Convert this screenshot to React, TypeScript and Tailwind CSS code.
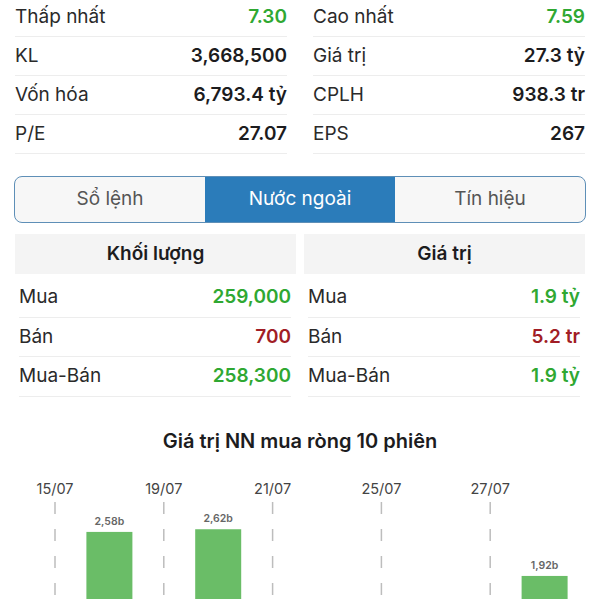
const font = { fontFamily: "Inter, 'Liberation Sans', sans-serif" }

type Stat = { label: string; value: string; tone?: "up" | "down" }

const leftStats: Stat[] = [
  { label: "Thấp nhất", value: "7.30", tone: "up" },
  { label: "KL", value: "3,668,500" },
  { label: "Vốn hóa", value: "6,793.4 tỷ" },
  { label: "P/E", value: "27.07" },
]

const rightStats: Stat[] = [
  { label: "Cao nhất", value: "7.59", tone: "up" },
  { label: "Giá trị", value: "27.3 tỷ" },
  { label: "CPLH", value: "938.3 tr" },
  { label: "EPS", value: "267" },
]

const volRows: Stat[] = [
  { label: "Mua", value: "259,000", tone: "up" },
  { label: "Bán", value: "700", tone: "down" },
  { label: "Mua-Bán", value: "258,300", tone: "up" },
]

const valRows: Stat[] = [
  { label: "Mua", value: "1.9 tỷ", tone: "up" },
  { label: "Bán", value: "5.2 tr", tone: "down" },
  { label: "Mua-Bán", value: "1.9 tỷ", tone: "up" },
]

function toneClass(tone?: "up" | "down") {
  if (tone === "up") return "text-[#2fa832]"
  if (tone === "down") return "text-[#a11d25]"
  return "text-[#1c1c1e]"
}

function StatRow({ s, tall }: { s: Stat; tall?: boolean }) {
  return (
    <div
      className={`flex items-center justify-between border-b border-[#ededed] text-[19px] ${
        tall ? "h-[39.5px]" : "h-[39px]"
      }`}
    >
      <span className="text-[#2a2a2a]">{s.label}</span>
      <span className={`font-semibold ${toneClass(s.tone)}`}>{s.value}</span>
    </div>
  )
}

function TradeTable({ title, rows }: { title: string; rows: Stat[] }) {
  return (
    <div>
      <div className="flex h-10 items-center justify-center bg-[#f4f4f4] text-[19px] font-semibold text-[#1c1c1e]">
        {title}
      </div>
      <div className="mt-[4px] pl-[4px] pr-[5px]">
        {rows.map((r) => (
          <StatRow key={r.label} s={r} tall />
        ))}
      </div>
    </div>
  )
}

// 10 sessions, every other one labelled
const slots = [55, 109.4, 163.8, 218.2, 272.6, 327, 381.4, 435.8, 490.2, 544.6]
const dates: Record<number, string> = { 0: "15/07", 2: "19/07", 4: "21/07", 6: "25/07", 8: "27/07" }
const bars = [
  { i: 1, value: 2.58, text: "2,58b" },
  { i: 3, value: 2.62, text: "2,62b" },
  { i: 9, value: 1.92, text: "1,92b" },
]

function NetChart() {
  const base = 235
  const scale = 66.7
  return (
    <svg width="600" height="130" className="block" style={font}>
      {Object.entries(dates).map(([k, d]) => {
        const x = slots[Number(k)]
        return (
          <g key={k}>
            <text x={x} y={25} textAnchor="middle" fontSize="14.5" fill="#444">
              {d}
            </text>
            <line x1={x} x2={x} y1={33} y2={130} stroke="#bdbdbd" strokeWidth="1.5" strokeDasharray="12 15" />
          </g>
        )
      })}
      {bars.map((b) => {
        const x = slots[b.i]
        const top = base - b.value * scale
        return (
          <g key={b.i}>
            <text x={x} y={top - 7} textAnchor="middle" fontSize="10.5" fontWeight="600" fill="#666">
              {b.text}
            </text>
            <rect x={x - 23} y={top} width="46" height={base - top} fill="#6abd67" />
          </g>
        )
      })}
    </svg>
  )
}

export default function App() {
  const tabs = ["Sổ lệnh", "Nước ngoài", "Tín hiệu"]
  return (
    <div className="w-[600px] overflow-hidden bg-white" style={font}>
      <div className="-mt-[2px] grid grid-cols-2 gap-[26px] px-[15px]">
        <div>
          {leftStats.map((s) => (
            <StatRow key={s.label} s={s} />
          ))}
        </div>
        <div>
          {rightStats.map((s) => (
            <StatRow key={s.label} s={s} />
          ))}
        </div>
      </div>

      <div className="mx-[14px] mt-[22px] grid h-[47px] grid-cols-3 overflow-hidden rounded-[8px] border-[1.5px] border-[#5e8fb7] bg-[#f7f7f7]">
        {tabs.map((t, i) => (
          <div
            key={t}
            className={`flex items-center justify-center text-[19px] ${
              i === 1 ? "bg-[#2b7cba] text-white" : "text-[#555]"
            }`}
          >
            {t}
          </div>
        ))}
      </div>

      <div className="mt-[11px] grid grid-cols-2 gap-2 px-[15px]">
        <TradeTable title="Khối lượng" rows={volRows} />
        <TradeTable title="Giá trị" rows={valRows} />
      </div>

      <div className="mt-[30px] flex h-[28px] items-center justify-center text-[20px] font-semibold text-[#1c1c1e]">
        Giá trị NN mua ròng 10 phiên
      </div>

      <div className="mt-[14px]">
        <NetChart />
      </div>
    </div>
  )
}
